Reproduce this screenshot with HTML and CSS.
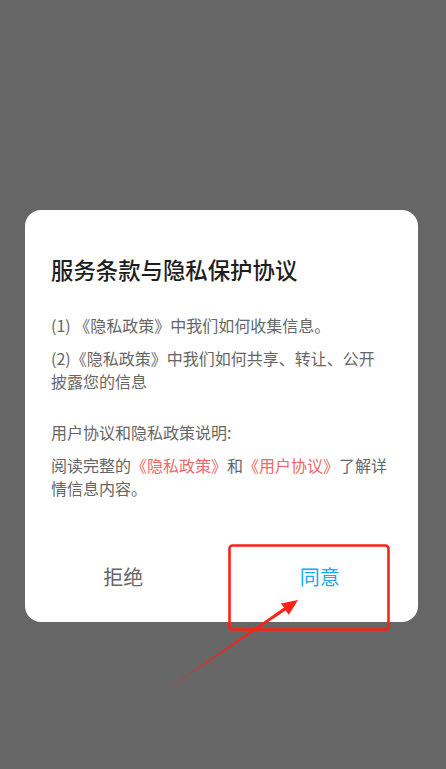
FILE: index.html
```html
<!DOCTYPE html>
<html lang="zh-CN">
<head>
<meta charset="utf-8">
<title>服务条款与隐私保护协议</title>
<link rel="stylesheet" href="styles.css">
</head>
<body>
<div class="screen">
  <div class="dialog">
    <div class="dialog-body">
      <h1 class="title">服务条款与隐私保护协议</h1>
      <p class="para">(1) 《隐私政策》中我们如何收集信息。</p>
      <p class="para para-tight">(2)《隐私政策》中我们如何共享、转让、公开<br>披露您的信息</p>
      <p class="para para-section">用户协议和隐私政策说明:</p>
      <p class="para para-tight">阅读完整的<span class="link">《隐私政策》</span>和<span class="link">《用户协议》</span>了解详情信息内容。</p>
    </div>
    <div class="actions">
      <div class="btn btn-refuse">拒绝</div>
      <div class="btn btn-agree">同意</div>
    </div>
  </div>
  <svg class="annotation" width="446" height="769" viewBox="0 0 446 769" xmlns="http://www.w3.org/2000/svg">
    <rect x="229.5" y="545.5" width="159" height="84" rx="3" ry="3" fill="none" stroke="#ff2216" stroke-width="2.6"/>
    <polygon points="166,690 285.6,610.4 288.8,614.8 298,600 280.8,603.4 284,607.6" fill="#ff2216"/>
  </svg>
</div>
</body>
</html>
```
FILE: styles.css
```css
html, body {
  margin: 0;
  padding: 0;
}
body {
  background: #666666;
  font-family: "Noto Sans CJK SC", "Noto Sans", sans-serif;
}
.screen {
  position: relative;
  width: 446px;
  height: 769px;
  overflow: hidden;
  padding-top: 210px;
  box-sizing: border-box;
}
.dialog {
  margin-left: 25px;
  width: 393px;
  height: 412px;
  background: #ffffff;
  border-radius: 16px;
  box-sizing: border-box;
  display: flex;
  flex-direction: column;
}
.dialog-body {
  padding: 44px 24px 0 26px;
}
.title {
  margin: 0;
  font-size: 22.4px;
  line-height: 30px;
  font-weight: 500;
  color: #1e1e1e;
}
.para {
  margin: 29px 0 0 0;
  font-size: 16px;
  line-height: 24px;
  color: #666666;
}
.para-tight {
  margin-top: 10px;
  line-height: 23px;
}
.para-section {
  margin-top: 27px;
}
.link {
  color: #f06868;
}
.actions {
  margin-top: auto;
  margin-bottom: 18px;
  display: flex;
  height: 56px;
}
.btn {
  flex: 1;
  display: flex;
  align-items: center;
  justify-content: center;
  font-size: 20px;
}
.btn-refuse {
  color: #666666;
}
.btn-agree {
  color: #1aa9f2;
}
.annotation {
  position: absolute;
  left: 0;
  top: 0;
  pointer-events: none;
}
```
